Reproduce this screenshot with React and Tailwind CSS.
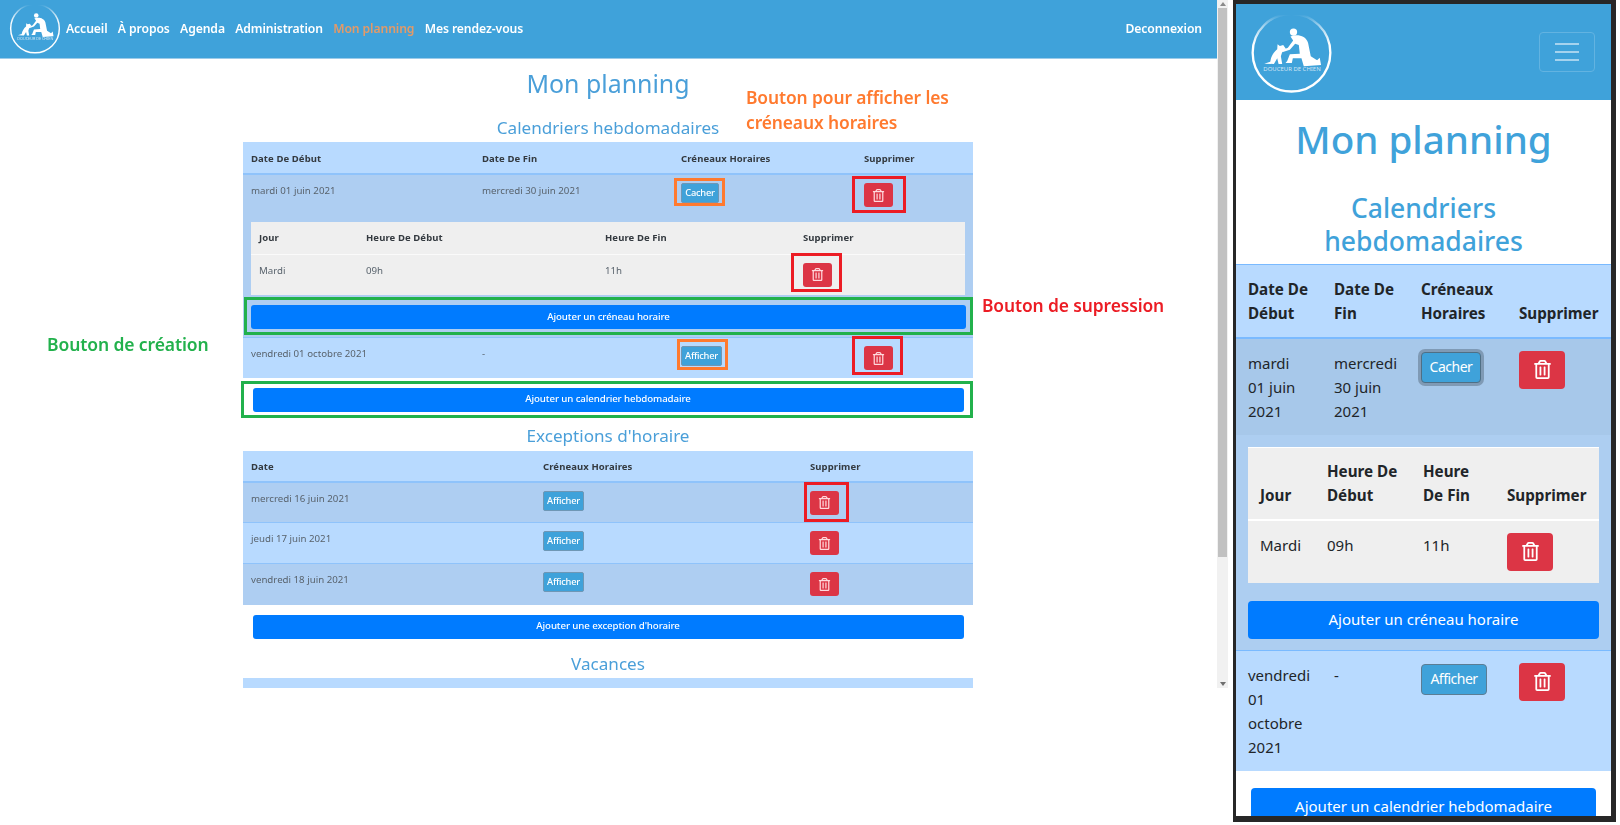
import React from "react";
import { FaRegTrashAlt } from "react-icons/fa";

function Logo({ id, className }) {
  return (
    <svg viewBox="150 35 250 245" className={className}>
      <defs>
        <linearGradient id={id} gradientUnits="userSpaceOnUse" x1="0" y1="40" x2="0" y2="130">
          <stop offset="0" stopColor="#fff" stopOpacity="0" />
          <stop offset="0.4" stopColor="#fff" stopOpacity="0.55" />
          <stop offset="1" stopColor="#fff" stopOpacity="1" />
        </linearGradient>
      </defs>
      <circle cx="275" cy="155" r="117" fill="none" stroke={`url(#${id})`} strokeWidth="7" />
      <g fill="#fff">
        <circle cx="281" cy="93" r="11" />
        <path d="M272 106 C292 99 318 103 325 126 L333 166 L352 178 L360 170 L364 192 L312 196 L305 172 L279 172 L276 186 L257 186 L262 180 L270 160 L300 158 L297 132 L286 128 L270 146 L247 154 L246 148 L264 140 L280 118 Z" />
        <path d="M193 188 L211 182 C213 166 223 152 232 145 L233 130 L240 135 L250 132 L258 143 L248 150 L243 166 L247 189 L236 189 L232 172 L222 189 Z" />
      </g>
      <text x="190" y="210" fontSize="14" fill="#fff" fillOpacity="0.75" textLength="173" lengthAdjust="spacingAndGlyphs" fontFamily="'Noto Sans', sans-serif">DOUCEUR DE CHIEN</text>
    </svg>
  );
}

function TrashS() {
  return (
    <button className="w-[29px] h-[24px] rounded-[3px] bg-[#dc3545] flex items-center justify-center text-[#ffd9dd]">
      <FaRegTrashAlt size={13} />
    </button>
  );
}
function TrashL() {
  return (
    <button className="w-[46px] h-[38px] rounded-[4px] bg-[#dc3545] flex items-center justify-center text-white">
      <FaRegTrashAlt size={19} />
    </button>
  );
}
function InfoS({ label, className }) {
  return (
    <button className={`block h-[20px] rounded-[2px] bg-[#3fa2da] border border-[#6f97b5] text-white text-[9.3px] leading-none font-medium tracking-[-0.25px] ${className}`}>
      {label}
    </button>
  );
}
function BlueS({ label, className }) {
  return (
    <button className={`block h-[24px] rounded-[3px] bg-[#007bff] text-white text-[9.7px] font-medium tracking-[-0.1px] ${className}`}>
      {label}
    </button>
  );
}

function Note({ className }) {
  return <div className={`absolute border-[3px] ${className}`} />;
}

function LeftPane() {
  const th = "px-2 pt-2 pb-[6px] text-left align-top text-[9.5px] leading-4 font-bold text-[#343a40] tracking-[0.1px]";
  const thMain = "px-2 pt-[9px] pb-[5px] text-left align-top text-[9.5px] leading-4 font-bold text-[#343a40] tracking-[0.1px]";
  const td = "px-2 pt-2 pb-1 align-top text-[9.7px] leading-4 text-[#59636d]";
  return (
    <div className="relative w-[1217px] h-[688px] overflow-hidden blur-[0.3px]">
      <nav className="h-[59px] bg-[#3fa2da] border-b border-[#9ccbe9] flex items-center pl-[9px] pr-[15px]">
        <Logo id="logoSmall" className="w-[52px] h-[52px] shrink-0" />
        <div className="flex items-center gap-[10.3px] ml-[5px] text-[12.2px] font-semibold text-white tracking-[-0.1px]">
          <a>Accueil</a>
          <a>À propos</a>
          <a>Agenda</a>
          <a>Administration</a>
          <a className="text-[#e39a68]">Mon planning</a>
          <a>Mes rendez-vous</a>
        </div>
        <a className="ml-auto text-[12.2px] font-semibold text-white tracking-[-0.1px]">Deconnexion</a>
      </nav>

      <main className="w-[730px] ml-[243px]">
        <h1 className="h-[53px] pb-[3px] flex items-center justify-center text-[24.9px] font-normal text-[#4a9fd9]">Mon planning</h1>
        <h2 className="h-[30px] pt-[2px] flex items-center justify-center text-[17.1px] font-normal text-[#4a9fd9]">Calendriers hebdomadaires</h2>

        <table className="w-full table-fixed border-collapse bg-[#b8daff]">
          <thead>
            <tr className="h-[32px] border-b-2 border-[#8fc3fb]">
              <th className={`${thMain} w-[231px]`}>Date De Début</th>
              <th className={`${thMain} w-[199px]`}>Date De Fin</th>
              <th className={`${thMain} w-[183px]`}>Créneaux Horaires</th>
              <th className={thMain}>Supprimer</th>
            </tr>
          </thead>
          <tbody>
            <tr className="h-[48px] bg-[#aecef2]">
              <td className={td}>mardi 01 juin 2021</td>
              <td className={td}>mercredi 30 juin 2021</td>
              <td className={td}><InfoS label="Cacher" className="w-[38px]" /></td>
              <td className={td}><TrashS /></td>
            </tr>
            <tr className="bg-[#aecef2]">
              <td colSpan={4} className="px-2 pt-0 pb-2">
                <table className="w-full table-fixed border-collapse bg-[#efefef]">
                  <thead>
                    <tr className="h-[32px] border-b border-[#fafafa]">
                      <th className={`${th} w-[107px]`}>Jour</th>
                      <th className={`${th} w-[239px]`}>Heure De Début</th>
                      <th className={`${th} w-[198px]`}>Heure De Fin</th>
                      <th className={th}>Supprimer</th>
                    </tr>
                  </thead>
                  <tbody>
                    <tr className="h-[41px]">
                      <td className={td}>Mardi</td>
                      <td className={td}>09h</td>
                      <td className={td}>11h</td>
                      <td className={td}><TrashS /></td>
                    </tr>
                  </tbody>
                </table>
                <BlueS label="Ajouter un créneau horaire" className="w-[715px] mt-[10px]" />
              </td>
            </tr>
            <tr className="h-[40px] border-t border-[#8fc3fb]">
              <td className={td}>vendredi 01 octobre 2021</td>
              <td className={td}>-</td>
              <td className={td}><InfoS label="Afficher" className="w-[41px]" /></td>
              <td className={td}><TrashS /></td>
            </tr>
          </tbody>
        </table>

        <BlueS label="Ajouter un calendrier hebdomadaire" className="w-[711px] mx-auto mt-[10px]" />

        <h2 className="h-[39px] pt-[9px] flex items-center justify-center text-[17.1px] font-normal text-[#4a9fd9]">Exceptions d'horaire</h2>

        <table className="w-full table-fixed border-collapse bg-[#b8daff]">
          <thead>
            <tr className="h-[31px] border-b-2 border-[#8fc3fb]">
              <th className={`${th} w-[292px]`}>Date</th>
              <th className={`${th} w-[267px]`}>Créneaux Horaires</th>
              <th className={th}>Supprimer</th>
            </tr>
          </thead>
          <tbody>
            <tr className="h-[41px] bg-[#aecef2]">
              <td className={td}>mercredi 16 juin 2021</td>
              <td className={td}><InfoS label="Afficher" className="w-[41px]" /></td>
              <td className={td}><TrashS /></td>
            </tr>
            <tr className="h-[41px] border-t border-[#8fc3fb]">
              <td className={td}>jeudi 17 juin 2021</td>
              <td className={td}><InfoS label="Afficher" className="w-[41px]" /></td>
              <td className={td}><TrashS /></td>
            </tr>
            <tr className="h-[41px] bg-[#aecef2] border-t border-[#8fc3fb]">
              <td className={td}>vendredi 18 juin 2021</td>
              <td className={td}><InfoS label="Afficher" className="w-[41px]" /></td>
              <td className={td}><TrashS /></td>
            </tr>
          </tbody>
        </table>

        <BlueS label="Ajouter une exception d'horaire" className="w-[711px] mx-auto mt-[10px]" />

        <h2 className="h-[39px] pt-[11px] flex items-center justify-center text-[17.1px] font-normal text-[#4a9fd9]">Vacances</h2>
        <div className="h-[32px] bg-[#b8daff]" />
      </main>

      <Note className="border-[#ff7a2f] left-[674px] top-[178px] w-[51px] h-[28px]" />
      <Note className="border-[#ff7a2f] left-[677px] top-[339px] w-[51px] h-[31px]" />
      <Note className="border-[#ec1c24] left-[852px] top-[176px] w-[54px] h-[37px]" />
      <Note className="border-[#ec1c24] left-[791px] top-[253px] w-[51px] h-[39px]" />
      <Note className="border-[#ec1c24] left-[852px] top-[336px] w-[51px] h-[39px]" />
      <Note className="border-[#ec1c24] left-[804px] top-[482px] w-[45px] h-[40px]" />
      <Note className="border-[#22b14c] left-[244px] top-[297px] w-[729px] h-[38px]" />
      <Note className="border-[#22b14c] left-[241px] top-[381px] w-[732px] h-[37px]" />

      <div className="absolute left-[746px] top-[85px] text-[17.4px] leading-[24.5px] font-semibold text-[#ff7a2f] tracking-[-0.1px]">
        Bouton pour afficher les<br />créneaux horaires
      </div>
      <div className="absolute left-[982px] top-[293px] text-[17.4px] leading-6 font-semibold text-[#ec1c24] tracking-[-0.1px]">Bouton de supression</div>
      <div className="absolute left-[47px] top-[332px] text-[17.5px] leading-6 font-semibold text-[#22b14c] tracking-[-0.1px]">Bouton de création</div>
    </div>
  );
}

function Scrollbar() {
  return (
    <div className="w-[11px] h-[688px] bg-[#f1f1f1] flex flex-col items-center">
      <svg viewBox="0 0 6 4" className="w-[6px] h-[4px] my-[2px] shrink-0"><path d="M3 0 L6 4 L0 4 Z" fill="#8a8a8a" /></svg>
      <div className="w-[9px] h-[549px] bg-[#c1c1c1] shrink-0" />
      <div className="flex-1" />
      <svg viewBox="0 0 6 4" className="w-[6px] h-[4px] my-[2px] shrink-0"><path d="M0 0 L6 0 L3 4 Z" fill="#6f6f6f" /></svg>
    </div>
  );
}

function RightPane() {
  const th = "px-3 pt-[11px] pb-3 text-left align-bottom text-[15.2px] leading-6 font-bold text-[#212529]";
  const td = "px-3 py-3 align-top text-[15px] leading-6 text-[#212529]";
  return (
    <div className="ml-[5px] w-[383px] h-[822px] bg-[#272727] pt-[4px] pl-[3px] pr-[5px] pb-[6px]">
      <div className="w-[375px] h-[812px] bg-white overflow-hidden">
        <nav className="h-[96px] bg-[#3fa2da] flex items-center justify-between pl-[14px] pr-[16px]">
          <Logo id="logoLarge" className="w-[83px] h-[83px] mt-[3px]" />
          <button className="w-[56px] h-[40px] rounded-[4px] border border-[#62b3e1] flex flex-col items-center justify-center gap-[6.5px]">
            <span className="w-[24px] h-[1.5px] bg-[#a5d3ee]" />
            <span className="w-[24px] h-[1.5px] bg-[#a5d3ee]" />
            <span className="w-[24px] h-[1.5px] bg-[#a5d3ee]" />
          </button>
        </nav>

        <h1 className="h-[80px] flex items-center justify-center text-[38.6px] font-medium text-[#3fa2da]">Mon planning</h1>
        <h2 className="h-[84px] pt-[12px] text-center text-[26.5px] leading-[33px] font-medium text-[#3fa2da]">
          Calendriers<br />hebdomadaires
        </h2>

        <table className="w-full table-fixed border-collapse bg-[#b8daff] border-t border-[#7abaff]">
          <thead>
            <tr className="h-[73px] border-b-2 border-[#7abaff]">
              <th className={`${th} w-[86px]`}>Date De Début</th>
              <th className={`${th} w-[87px]`}>Date De Fin</th>
              <th className={`${th} w-[98px]`}>Créneaux Horaires</th>
              <th className={th}>Supprimer</th>
            </tr>
          </thead>
          <tbody>
            <tr className="h-[97px] bg-[#a7c8ea]">
              <td className={td}>mardi 01 juin 2021</td>
              <td className={td}>mercredi 30 juin 2021</td>
              <td className={td}>
                <button className="block mt-[1px] w-[60px] h-[31px] rounded-[4px] bg-[#3fa2da] border border-[#4f6f85] ring-[3px] ring-[#7f9ab5] text-white text-[14px] tracking-[-0.5px]">Cacher</button>
              </td>
              <td className={td}><TrashL /></td>
            </tr>
            <tr className="bg-[#adcef1]">
              <td colSpan={4} className="px-3 pt-3 pb-[11px]">
                <table className="w-full table-fixed border-collapse bg-[#efefef] border-t border-white">
                  <thead>
                    <tr className="h-[72px] border-b-2 border-white">
                      <th className={`${th} w-[67px]`}>Jour</th>
                      <th className={`${th} w-[96px]`}>Heure De Début</th>
                      <th className={`${th} w-[84px]`}>Heure De Fin</th>
                      <th className={th}>Supprimer</th>
                    </tr>
                  </thead>
                  <tbody>
                    <tr className="h-[63px]">
                      <td className={td}>Mardi</td>
                      <td className={td}>09h</td>
                      <td className={td}>11h</td>
                      <td className={td}><TrashL /></td>
                    </tr>
                  </tbody>
                </table>
                <button className="block w-full h-[38px] mt-[18px] rounded-[4px] bg-[#007bff] text-white text-[15px]">Ajouter un créneau horaire</button>
              </td>
            </tr>
            <tr className="h-[120px] border-t border-[#7abaff]">
              <td className={td}>vendredi 01 octobre 2021</td>
              <td className={td}>-</td>
              <td className={td}>
                <button className="block mt-[1px] w-[66px] h-[31px] rounded-[4px] bg-[#3fa2da] border border-[#5c7d94] text-white text-[14px] tracking-[-0.5px]">Afficher</button>
              </td>
              <td className={td}><TrashL /></td>
            </tr>
          </tbody>
        </table>

        <button className="block w-[345px] h-[38px] mx-auto mt-[17px] rounded-[4px] bg-[#007bff] text-white text-[15px]">Ajouter un calendrier hebdomadaire</button>
      </div>
    </div>
  );
}

export default function App() {
  return (
    <div className="w-[1620px] h-[825px] bg-white overflow-hidden flex items-start font-['Noto_Sans',sans-serif]">
      <LeftPane />
      <Scrollbar />
      <RightPane />
    </div>
  );
}
